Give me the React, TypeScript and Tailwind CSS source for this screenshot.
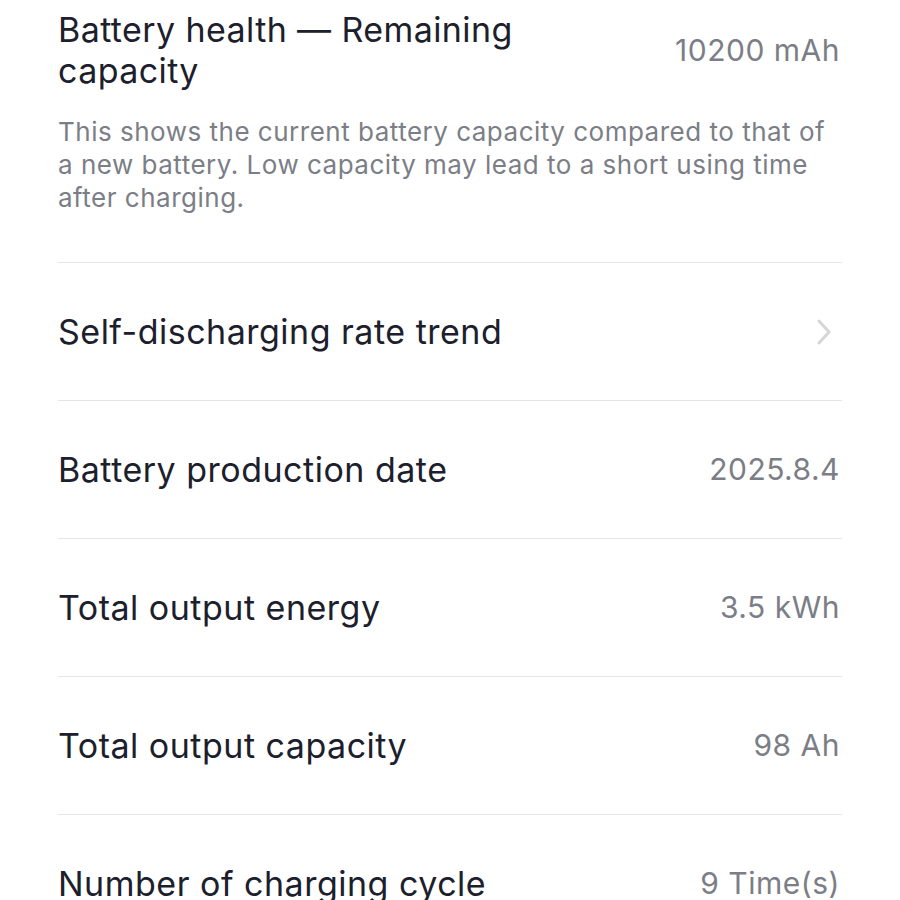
import React from "react";

const rows: { label: string; value?: string; chevron?: boolean }[] = [
  { label: "Self-discharging rate trend", chevron: true },
  { label: "Battery production date", value: "2025.8.4" },
  { label: "Total output energy", value: "3.5 kWh" },
  { label: "Total output capacity", value: "98 Ah" },
  { label: "Number of charging cycle", value: "9 Time(s)" },
];

export default function App() {
  return (
    <div
      className="w-[900px] h-[900px] overflow-hidden bg-white px-[58px]"
      style={{ fontFamily: "Inter, 'Noto Sans', sans-serif" }}
    >
      <div className="pt-[9px] pb-[48px]">
        <div className="flex items-center justify-between">
          <div className="w-[500px] text-[34px] leading-[41px] text-[#1c202c] tracking-[0.4px]">
            Battery health — Remaining capacity
          </div>
          <div className="text-[30px] text-[#7b7e86] tracking-[0.5px] pr-[2px]">10200 mAh</div>
        </div>
        <div className="mt-[24px] text-[26px] leading-[33px] text-[#7b7e86] tracking-[0.5px]">
          This shows the current battery capacity compared to that of a new
          battery. Low capacity may lead to a short using time after charging.
        </div>
      </div>
      {rows.map((r) => (
        <div
          key={r.label}
          className="h-[138px] border-t border-[#e6e6e8] flex items-center justify-between"
        >
          <div className="text-[34px] text-[#1c202c] tracking-[0.5px] whitespace-nowrap">{r.label}</div>
          {r.chevron ? (
            <svg width="16" height="28" viewBox="0 0 16 28" className="mr-[10px]">
              <path
                d="M3 3 L13 14 L3 25"
                fill="none"
                stroke="#d6d6d9"
                strokeWidth="3"
                strokeLinecap="round"
                strokeLinejoin="round"
              />
            </svg>
          ) : (
            <div className="text-[30px] text-[#7b7e86] tracking-[0.5px] pr-[2px]">{r.value}</div>
          )}
        </div>
      ))}
    </div>
  );
}
